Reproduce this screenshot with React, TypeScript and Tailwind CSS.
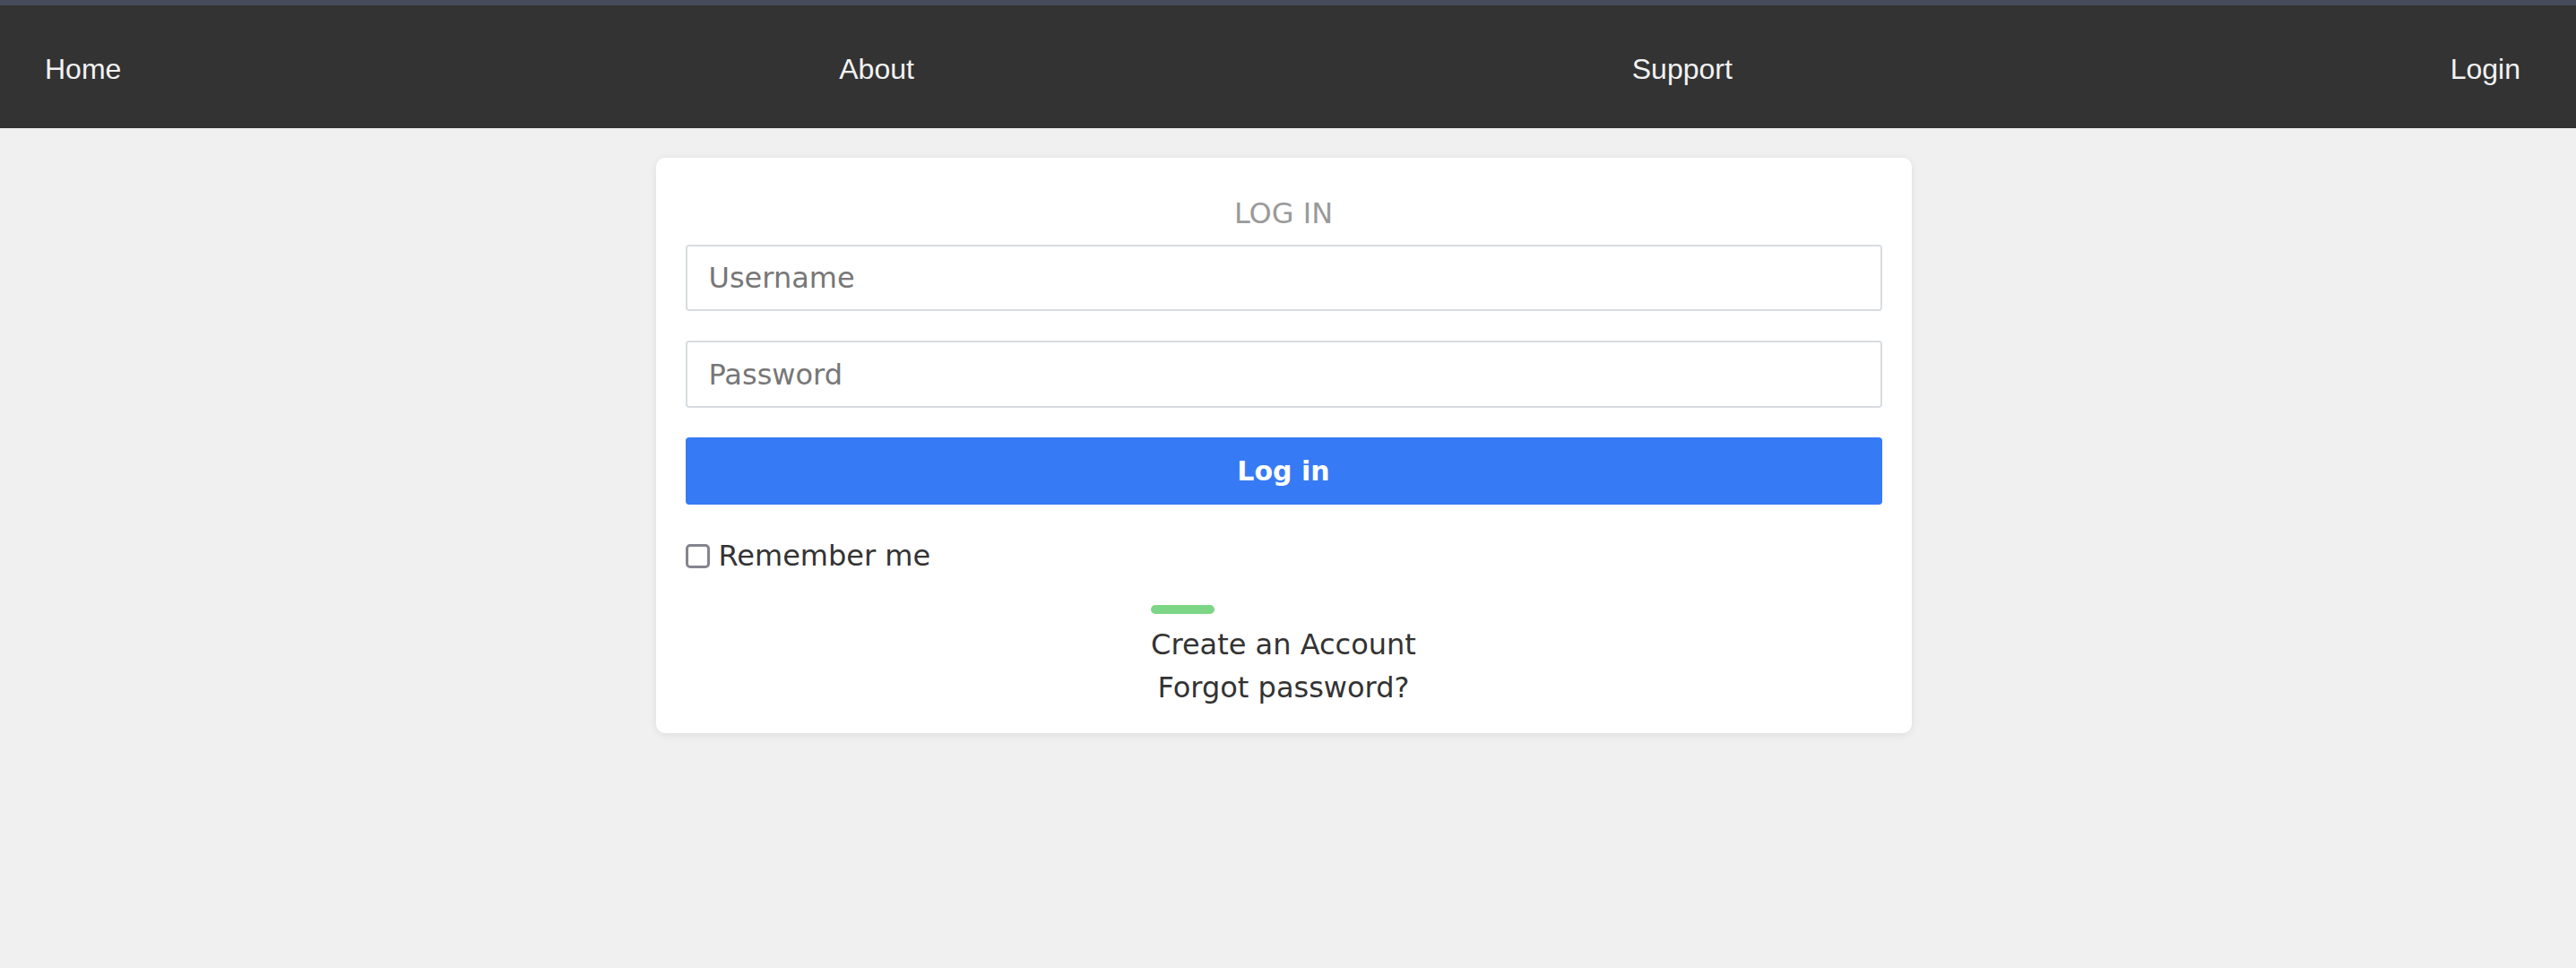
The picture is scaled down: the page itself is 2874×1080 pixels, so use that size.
import { useState } from 'react';

const navLinks = ['Home', 'About', 'Support', 'Login'];

const App: React.FC = () => {
  const [remember, setRemember] = useState(false);

  return (
    <div className="min-h-screen bg-[#f0f0f0] text-[32px] text-[#333333]" style={{ fontFamily: '"DejaVu Sans", sans-serif' }}>
      <div className="h-[6px] bg-[#474a5a]" />
      <nav
        className="flex h-[137px] items-center justify-between bg-[#333333] pl-[50px] pr-[62px] text-[32px] text-[#f2f2f2]"
        style={{ fontFamily: '"Liberation Sans", Arial, sans-serif' }}
      >
        {navLinks.map((link) => (
          <a key={link} href="#" className="pt-[4px]">
            {link}
          </a>
        ))}
      </nav>

      <div className="flex justify-center pt-[33px] pr-[10px]">
        <div className="w-[1401px] rounded-[10px] bg-white px-[33px] pt-[38px] pb-[27px] shadow-[0_2px_10px_rgba(0,0,0,0.08)]">
          <h1 className="mb-[11px] text-center text-[32px] leading-[48px] text-[#9a9a9a]">LOG IN</h1>

          <input
            type="text"
            placeholder="Username"
            className="block h-[74px] w-full rounded-[4px] border-2 border-[#d8dce0] px-[24px] text-[32px] outline-none placeholder:text-[#777]"
          />
          <input
            type="password"
            placeholder="Password"
            className="mt-[33px] block h-[75px] w-full rounded-[4px] border-2 border-[#d8dce0] px-[24px] text-[32px] outline-none placeholder:text-[#777]"
          />
          <button className="mt-[33px] block h-[75px] w-full rounded-[4px] bg-[#367af6] text-[30px] font-bold text-white">
            Log in
          </button>

          <label className="mt-[33px] flex cursor-pointer items-center gap-[10px] leading-[48px]" onClick={() => setRemember(!remember)}>
            <span className="flex h-[27px] w-[27px] items-center justify-center rounded-[5px] border-[3px] border-[#858590] bg-white">
              {remember && <span className="h-[13px] w-[13px] bg-[#367af6]" />}
            </span>
            <span>Remember me</span>
          </label>

          <div className="mt-[31px] flex flex-col items-center leading-[48px]">
            <a href="#" className="inline-block">
              <span className="block h-[10px] w-[71px] rounded-full bg-[#7dd686]" />
              <span className="mt-[10px] block">Create an Account</span>
            </a>
            <a href="#">Forgot password?</a>
          </div>
        </div>
      </div>
    </div>
  );
};

export default App;
